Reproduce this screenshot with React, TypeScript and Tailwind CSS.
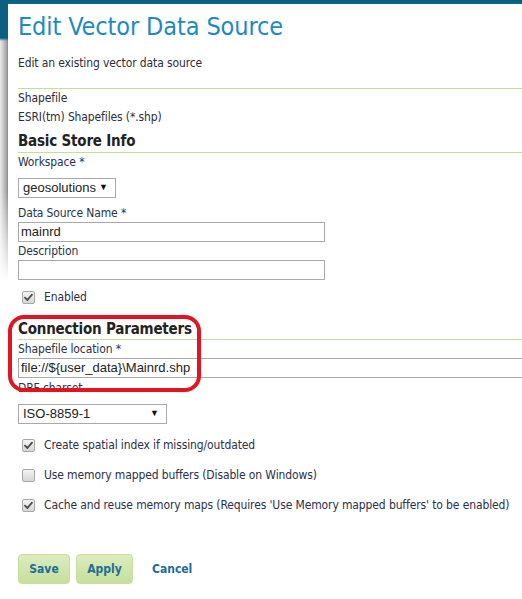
import React from 'react';

const ui = "font-['DejaVu_Sans_Condensed','DejaVu_Sans',sans-serif]";
const field = "font-['Liberation_Sans',Arial,sans-serif] text-[13px] text-[#222]";

function Check({ checked }: { checked: boolean }) {
  return (
    <span className="ml-[4px] mr-[9px] flex h-[13px] w-[13px] items-center justify-center rounded-[2px] border border-[#a8a8a8] bg-gradient-to-b from-[#f4f4f4] to-[#d6d6d6]">
      {checked && (
        <svg width="9" height="9" viewBox="0 0 9 9">
          <path d="M1 4.6 L3.4 7 L8 1.6" fill="none" stroke="#4a4a4a" strokeWidth="1.8" strokeLinecap="round" strokeLinejoin="round" />
        </svg>
      )}
    </span>
  );
}

function Select({ value, width }: { value: string; width: string }) {
  return (
    <div className={`flex h-[20px] items-center justify-between border border-[#a9a9a9] bg-white pl-[4px] pr-[7px] ${width} ${field}`}>
      <span>{value}</span>
      <span className="text-[9px] text-[#111]">▼</span>
    </div>
  );
}

function Label({ children, className = '' }: { children: React.ReactNode; className?: string }) {
  return <div className={`flex h-[18px] items-center text-[12px] tracking-[-0.12px] text-[#27344a] ${className}`}>{children}</div>;
}

function CheckRow({ checked, children }: { checked: boolean; children: React.ReactNode }) {
  return (
    <div className="flex h-[30px] items-center text-[12px] tracking-[-0.12px] text-[#2b2f4a]">
      <Check checked={checked} />
      <span>{children}</span>
    </div>
  );
}

export default function App() {
  return (
    <div className={`flex min-h-[599px] w-[522px] overflow-hidden bg-[linear-gradient(to_bottom,#0a5b7d_0,#0d6a8e_4px,#fff_4px)] ${ui}`}>
      <div className="h-[300px] w-[8px] shrink-0 bg-[linear-gradient(to_bottom,#0b5f81_0,#0b5f81_38px,transparent_41px),linear-gradient(to_bottom,transparent_0,transparent_190px,#fff_280px),linear-gradient(to_right,#ececec,#b0b0b0_70%,#8a8a8a)]" />
      <div className="relative mt-[4px] flex-1 overflow-hidden rounded-tl-[8px] bg-white pl-[10px]">
        <h1 className="flex h-[46px] items-center text-[25px] font-normal tracking-[-0.1px] text-[#1c8ac4]">Edit Vector Data Source</h1>
        <div className="flex h-[26px] items-center text-[12px] tracking-[-0.12px] text-[#2d2d3a]">Edit an existing vector data source</div>
        <div className="mt-[12px] h-px bg-[#c3df92]" />
        <div className="flex h-[18px] items-center text-[12px] tracking-[-0.12px] text-[#2d2d3a]">Shapefile</div>
        <div className="flex h-[20px] items-center text-[12px] tracking-[-0.12px] text-[#2d2d3a]">ESRI(tm) Shapefiles (*.shp)</div>

        <h2 className="mt-[3px] flex h-[22px] items-center text-[15px] font-bold tracking-[-0.2px] text-[#222]">Basic Store Info</h2>
        <div className="h-px bg-[#c3df92]" />
        <Label>Workspace *</Label>
        <div className="mt-[7px]">
          <Select value="geosolutions" width="w-[98px]" />
        </div>
        <Label className="mt-[6px]">Data Source Name *</Label>
        <div className={`flex h-[20px] w-[307px] items-center border border-[#a9a9a9] px-[2px] ${field}`}>mainrd</div>
        <Label>Description</Label>
        <div className="h-[20px] w-[307px] border border-[#a9a9a9]" />
        <div className="flex h-[34px] items-center text-[12px] tracking-[-0.12px] text-[#2b2f4a]">
          <Check checked={true} />
          <span>Enabled</span>
        </div>

        <h2 className="mt-[6px] flex h-[19px] items-center text-[15px] font-bold tracking-[-0.2px] text-[#222]">Connection Parameters</h2>
        <div className="h-px bg-[#c3df92]" />
        <Label>Shapefile location *</Label>
        <div className={`flex h-[20px] w-[560px] items-center border border-[#a9a9a9] px-[2px] ${field}`}>file://${'{'}user_data{'}'}\Mainrd.shp</div>
        <div className="flex h-[20px] items-center text-[12px] tracking-[-0.12px] text-[#27344a]">DBF charset</div>
        <div className="mt-[6px]">
          <Select value="ISO-8859-1" width="w-[149px]" />
        </div>

        <div className="mt-[6px]">
          <CheckRow checked={true}>Create spatial index if missing/outdated</CheckRow>
          <CheckRow checked={false}>Use memory mapped buffers (Disable on Windows)</CheckRow>
          <CheckRow checked={true}>Cache and reuse memory maps (Requires 'Use Memory mapped buffers' to be enabled)</CheckRow>
        </div>

        <div className="mt-[34px] flex h-[30px] items-center">
          <button className="h-[30px] w-[52px] rounded-[4px] border border-[#c5de9f] bg-gradient-to-b from-[#dbecbd] to-[#c6df9c] text-[12px] font-bold text-[#1d6c98]">Save</button>
          <button className="ml-[6px] h-[30px] w-[57px] rounded-[4px] border border-[#c5de9f] bg-gradient-to-b from-[#dbecbd] to-[#c6df9c] text-[12px] font-bold text-[#1d6c98]">Apply</button>
          <span className="ml-[19px] text-[12px] font-bold text-[#1d6c98]">Cancel</span>
        </div>

        <div className="pointer-events-none absolute left-[0px] top-[311px] h-[77px] w-[193px] rounded-[16px] border-[4px] border-[#e3141f]" />
      </div>
    </div>
  );
}
